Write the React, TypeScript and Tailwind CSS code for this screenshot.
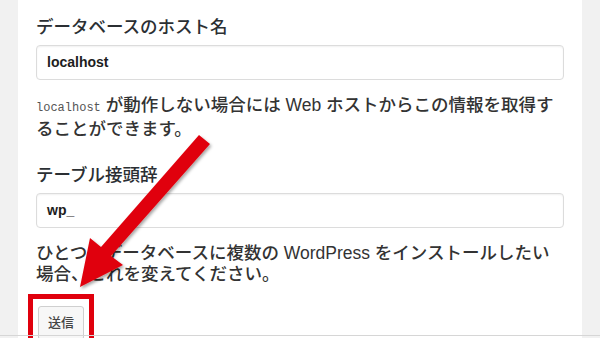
import React from 'react';

const jp = { fontFamily: '"Liberation Sans", "Noto Sans CJK JP", sans-serif' };

const Field = ({ label, value }: { label: string; value: string }) => (
  <div>
    <div className="text-[17.5px] leading-[22px] font-medium text-[#2b2f33]">{label}</div>
    <div className="mt-[7px] h-[35px] rounded-[4px] border border-[#dcdcdc] bg-white px-[10px] flex items-center shadow-[inset_0_1px_2px_rgba(0,0,0,0.06)]">
      <span className="text-[14px] font-bold text-[#1d1d1d]">{value}</span>
    </div>
  </div>
);

export default function App() {
  return (
    <div className="relative h-[338px] w-[600px] overflow-hidden bg-[#f1f1f1]" style={jp}>
      {/* white form panel */}
      <div className="mx-[18px] h-full bg-white px-[18px] pt-[16px]">
        <Field label="データベースのホスト名" value="localhost" />
        <p className="mt-[15px] text-[17.5px] leading-[21px] font-medium text-[#333]">
          <code className="text-[12px] font-normal text-[#555]" style={{ fontFamily: '"Liberation Mono", monospace' }}>localhost</code>{' '}
          が動作しない場合には Web ホストからこの情報を取得す
          <br />
          ることができます。
        </p>

        <div className="mt-[24px]">
          <Field label="テーブル接頭辞" value="wp_" />
        </div>
        <p className="mt-[15px] text-[17.5px] leading-[21px] font-medium text-[#333]">
          ひとつのデータベースに複数の WordPress をインストールしたい
          <br />
          場合、これを変えてください。
        </p>

        {/* submit, boxed in red */}
        <div className="mt-[9px] -ml-[8px] inline-block border-[5px] border-[#e0000d] px-[5px] pt-[7px] pb-[4px]">
          <button className="h-[34px] rounded-[3px] border border-[#cfcfcf] bg-[#f7f7f7] px-[9px] text-[13px] font-medium text-[#444] shadow-[0_1px_0_#ccc]">
            送信
          </button>
        </div>
      </div>

      {/* bottom edge */}
      <div className="absolute bottom-[2px] left-0 right-0 h-px bg-[#d6d6d6]" />

      {/* red arrow annotation */}
      <svg className="absolute left-0 top-0 pointer-events-none" width="600" height="338" viewBox="0 0 600 338">
        <defs>
          <filter id="sh" x="-20%" y="-20%" width="140%" height="140%">
            <feDropShadow dx="1.5" dy="2" stdDeviation="1.5" floodColor="#000" floodOpacity="0.35" />
          </filter>
        </defs>
        <polygon
          points="199,135 210,144 111,256 123,265 80,287 90,238 101,247"
          fill="#e0000d"
          filter="url(#sh)"
        />
      </svg>
    </div>
  );
}
